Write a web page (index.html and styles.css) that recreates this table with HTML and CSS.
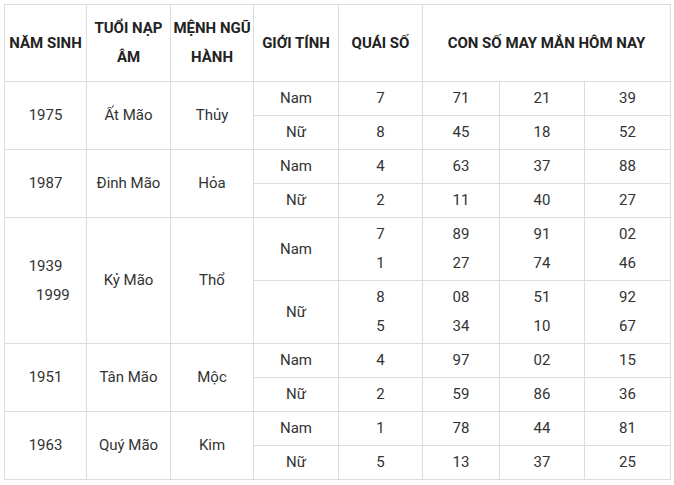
FILE: index.html
```html
<!DOCTYPE html>
<html lang="vi">
<head>
<meta charset="utf-8">
<title>Con số may mắn</title>
<link rel="stylesheet" href="styles.css">
</head>
<body>
<table class="luck">
  <colgroup>
    <col class="c1"><col class="c2"><col class="c3"><col class="c4"><col class="c5"><col class="c6"><col class="c7"><col class="c8">
  </colgroup>
  <thead>
    <tr>
      <th>NĂM SINH</th>
      <th>TUỔI NẠP<br>ÂM</th>
      <th>MỆNH NGŨ<br>HÀNH</th>
      <th>GIỚI TÍNH</th>
      <th>QUÁI SỐ</th>
      <th colspan="3">CON SỐ MAY MẮN HÔM NAY</th>
    </tr>
  </thead>
  <tbody>
    <tr><td rowspan="2">1975</td><td rowspan="2">Ất Mão</td><td rowspan="2">Thủy</td><td>Nam</td><td>7</td><td>71</td><td>21</td><td>39</td></tr>
    <tr><td>Nữ</td><td>8</td><td>45</td><td>18</td><td>52</td></tr>
    <tr><td rowspan="2">1987</td><td rowspan="2">Đinh Mão</td><td rowspan="2">Hỏa</td><td>Nam</td><td>4</td><td>63</td><td>37</td><td>88</td></tr>
    <tr><td>Nữ</td><td>2</td><td>11</td><td>40</td><td>27</td></tr>
    <tr><td rowspan="2">1939<br>&nbsp;&nbsp;&nbsp;&nbsp;1999</td><td rowspan="2">Kỷ Mão</td><td rowspan="2">Thổ</td><td>Nam</td><td>7<br>1</td><td>89<br>27</td><td>91<br>74</td><td>02<br>46</td></tr>
    <tr><td>Nữ</td><td>8<br>5</td><td>08<br>34</td><td>51<br>10</td><td>92<br>67</td></tr>
    <tr><td rowspan="2">1951</td><td rowspan="2">Tân Mão</td><td rowspan="2">Mộc</td><td>Nam</td><td>4</td><td>97</td><td>02</td><td>15</td></tr>
    <tr><td>Nữ</td><td>2</td><td>59</td><td>86</td><td>36</td></tr>
    <tr><td rowspan="2">1963</td><td rowspan="2">Quý Mão</td><td rowspan="2">Kim</td><td>Nam</td><td>1</td><td>78</td><td>44</td><td>81</td></tr>
    <tr><td>Nữ</td><td>5</td><td>13</td><td>37</td><td>25</td></tr>
  </tbody>
</table>
</body>
</html>
```
FILE: styles.css
```css
html, body {
  margin: 0;
  padding: 0;
  background: #ffffff;
}
body {
  padding: 4px 0 0 4px;
  font-family: Roboto, "Liberation Sans", Arial, sans-serif;
  font-size: 15px;
  color: #333333;
}
.luck {
  border-collapse: collapse;
  table-layout: fixed;
  width: 667px;
}
.c1 { width: 82px; }
.c2 { width: 84px; }
.c3 { width: 83px; }
.c4 { width: 85px; }
.c5 { width: 84px; }
.c6 { width: 77px; }
.c7 { width: 85px; }
.c8 { width: 86px; }
.luck th,
.luck td {
  border: 1px solid #dddddd;
  text-align: center;
  vertical-align: middle;
  line-height: 29px;
}
.luck th {
  font-weight: 700;
  color: #222222;
  padding: 9px 0;
  white-space: nowrap;
}
.luck td {
  padding: 2px 2px;
}
```
